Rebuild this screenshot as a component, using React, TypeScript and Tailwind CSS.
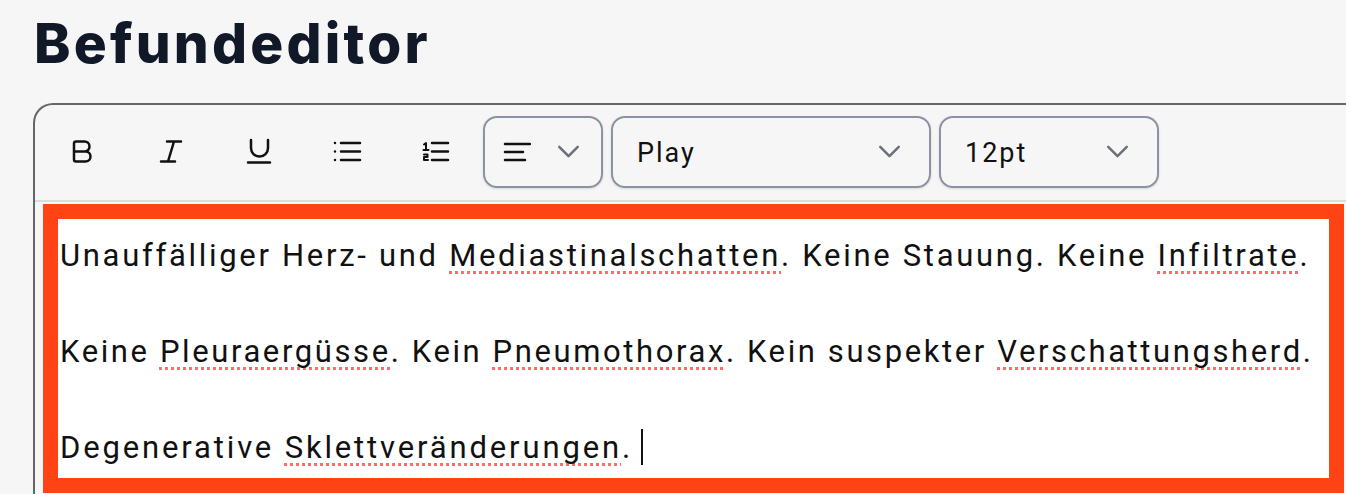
import { ChevronDown } from "lucide-react"
import type { ReactNode } from "react"

function ToolIcon({ children }: { children: ReactNode }) {
  return (
    <button type="button" className="flex h-[72px] w-[88px] shrink-0 items-center justify-center">
      <svg width="32" height="32" viewBox="0 0 32 32" fill="none" stroke="#111" strokeWidth="2.5" strokeLinecap="round" strokeLinejoin="round">
        {children}
      </svg>
    </button>
  )
}

function Chevron() {
  return <ChevronDown size={37} strokeWidth={1.6} className="shrink-0 text-[#6b7078]" />
}

function Select({ label, width }: { label: string; width: string }) {
  return (
    <div className={`${width} flex h-[72px] shrink-0 items-center justify-between rounded-[14px] border-2 border-[#8b92a3] pr-[21px] pl-[24px] shadow-sm`}>
      <span className="pt-1 text-[27px] tracking-[2px] text-[#111]">{label}</span>
      <Chevron />
    </div>
  )
}

function Misspelled({ children }: { children: string }) {
  return <span className="underline decoration-[#ff6b6b] decoration-dotted decoration-[3px] underline-offset-[5px] [text-decoration-skip-ink:none]">{children}</span>
}

export default function App() {
  return (
    <div className="h-[494px] w-[1346px] overflow-hidden bg-[#f6f6f6] pl-[33px] font-['Roboto',sans-serif]">
      <h1 className="h-[103px] pt-[9px] pl-px font-['Inter',sans-serif] text-[55px] leading-[68px] font-extrabold tracking-[3.2px] text-[#111827]">Befundeditor</h1>
      <div className="h-[400px] w-[1400px] rounded-tl-[20px] border-t-2 border-l-2 border-[#666]">
        <div className="flex h-[97px] items-center border-b-2 border-[#dcdcdc] pb-[2px] pl-1">
          <div className="mr-1 flex">
            <ToolIcon>
              <path d="M7 7.5a2 2 0 0 1 2-2h8.5a5 5 0 0 1 0 10H7z M7 15.5h11.5a5 5 0 0 1 0 10H9a2 2 0 0 1-2-2z" />
            </ToolIcon>
            <ToolIcon>
              <path d="M12 5.5h14 M6 25.5h14 M19 5.5l-6 20" />
            </ToolIcon>
            <ToolIcon>
              <path d="M8 4v8a8.5 8.5 0 0 0 17 0v-8 M5 26.5h22" />
            </ToolIcon>
            <ToolIcon>
              <path d="M10 7h19 M10 15.5h19 M10 24h19 M4 7v.01 M4 15.5v.01 M4 24v.01" />
            </ToolIcon>
            <ToolIcon>
              <path d="M13 7h16 M13 15.5h16 M13 24h16" />
              <path strokeWidth="2" d="M5 8.5l2-1.5v6 M4.5 14h5 M5 18.5h3.5v2.5h-3.5v3h4" />
            </ToolIcon>
          </div>
          <div className="flex gap-2">
            <div className="flex h-[72px] w-[120px] shrink-0 items-center justify-between rounded-[14px] border-2 border-[#8b92a3] pr-[14px] pl-[18px] shadow-sm">
              <svg width="28" height="20" viewBox="0 0 28 20" stroke="#111" strokeWidth="2.5" strokeLinecap="round">
                <path d="M2 2h25 M2 10h18 M2 18h20" />
              </svg>
              <Chevron />
            </div>
            <Select label="Play" width="w-[320px]" />
            <Select label="12pt" width="w-[220px]" />
          </div>
        </div>
        <div className="mt-[2px] ml-2 h-[289px] w-[1301px] border-[15px] border-[#ff4314] bg-white pt-px pl-[2px] text-[31px] leading-[72px] text-[#111]">
          <p className="mb-6 tracking-[2.7px]">Unauffälliger Herz- und <Misspelled>Mediastinalschatten</Misspelled>. Keine Stauung. Keine <Misspelled>Infiltrate</Misspelled>.</p>
          <p className="mb-6 tracking-[2.6px]">Keine <Misspelled>Pleuraergüsse</Misspelled>. Kein <Misspelled>Pneumothorax</Misspelled>. Kein suspekter <Misspelled>Verschattungsherd</Misspelled>.</p>
          <p className="flex items-center tracking-[2.85px]">
            <span>Degenerative <Misspelled>Sklettveränderungen</Misspelled>.</span>
            <span className="-mt-[2px] ml-2 h-[36px] w-[2px] bg-[#111]" />
          </p>
        </div>
      </div>
    </div>
  )
}
